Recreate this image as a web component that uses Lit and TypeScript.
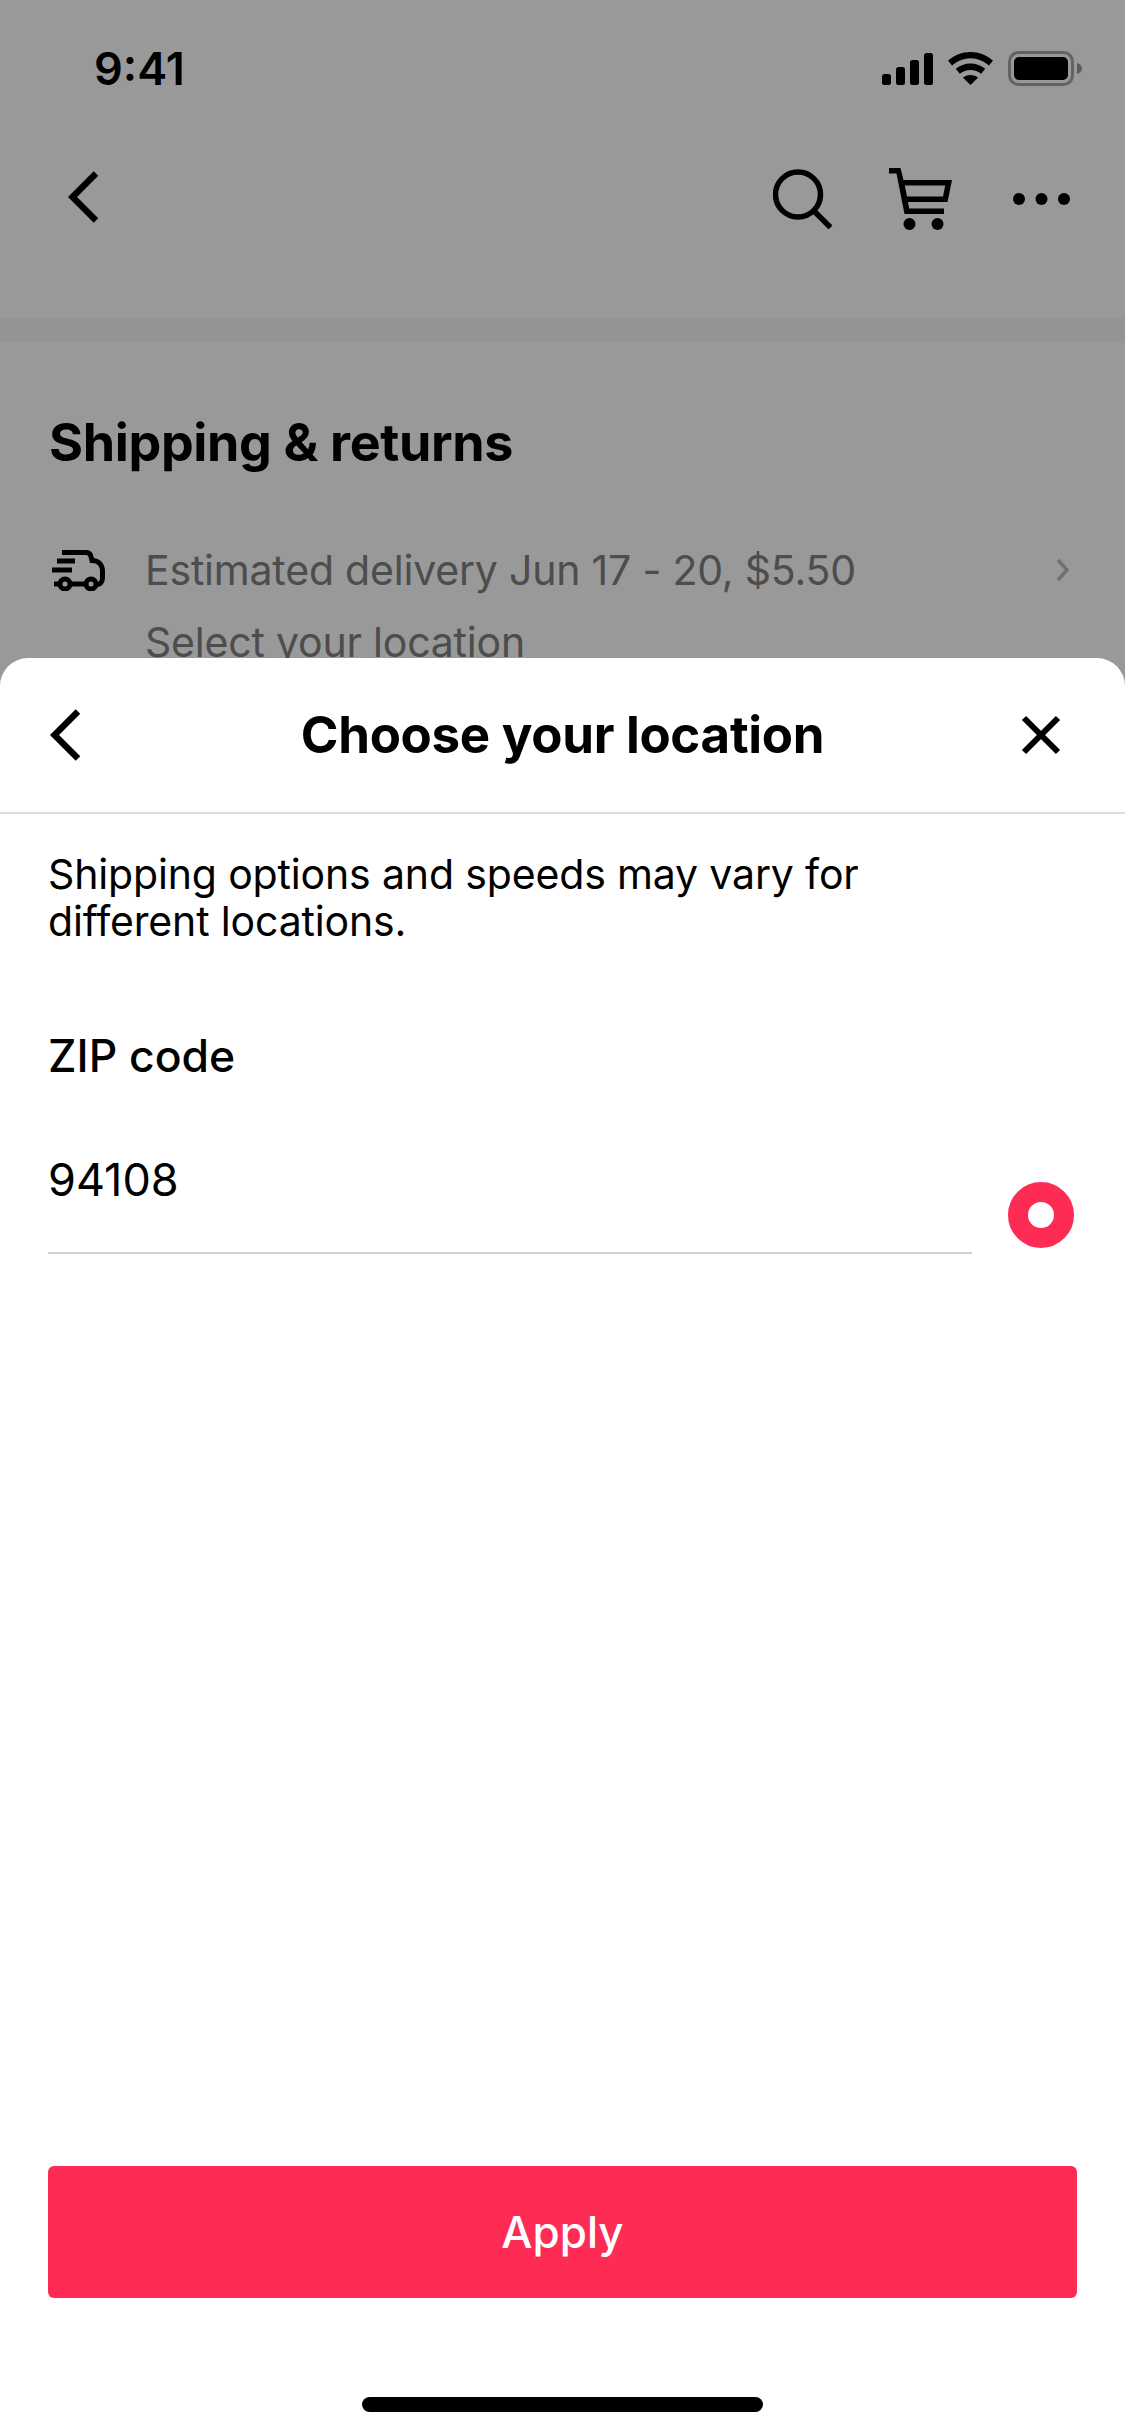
import { LitElement, html, css } from 'lit';
import { customElement } from 'lit/decorators.js';

const back = html`<svg class="back" viewBox="0 0 30 52"><path d="M28 2.500 4.500 26 28 49.500" fill="none" stroke="#000" stroke-width="6.500"/></svg>`;

@customElement('app-root')
export class AppRoot extends LitElement {
  static styles = css`
    :host {
      display: block;
      width: 1125px;
      height: 2436px;
      position: relative;
      overflow: hidden;
      background: #fff;
      color: #000;
      font-family: Inter, "Liberation Sans", sans-serif;
    }
    svg {
      display: block;
      flex: none;
    }
    .status {
      height: 133px;
      padding: 0 43px 0 94px;
      box-sizing: border-box;
      display: flex;
      align-items: center;
      justify-content: space-between;
    }
    .time {
      font-size: 45px;
      font-weight: 600;
      line-height: 32px;
      margin-top: 4px;
    }
    .status-icons {
      display: flex;
      align-items: center;
      gap: 15px;
      margin-top: 4px;
    }
    .nav {
      height: 185px;
      padding: 38px 55px 0 68px;
      box-sizing: border-box;
      display: flex;
      align-items: flex-start;
      justify-content: space-between;
    }
    .nav-actions {
      display: flex;
      align-items: center;
      margin-top: -3px;
    }
    .nav .back {
      width: 30px;
      height: 52px;
    }
    .search {
      margin-right: 55px;
    }
    .cart {
      margin-right: 61px;
    }
    .band {
      height: 24px;
      background: #f7f7f7;
    }
    .section {
      padding: 69px 55px 0 49px;
    }
    h2 {
      margin: 0;
      font-size: 52px;
      font-weight: 700;
      line-height: 64px;
      letter-spacing: -0.35px;
    }
    .row {
      display: flex;
      align-items: center;
      margin-top: 69px;
      color: #808080;
      font-size: 41px;
      letter-spacing: -0.2px;
      line-height: 52px;
    }
    .row .truck {
      margin: 0 40px 0 3px;
    }
    .row span {
      flex: 1;
    }
    .sub {
      margin: 20px 0 0 96px;
      color: #808080;
      font-size: 41px;
      letter-spacing: -0.2px;
      line-height: 52px;
    }
    .scrim {
      position: absolute;
      inset: 0;
      background: rgba(0, 0, 0, 0.4);
    }
    .sheet {
      position: absolute;
      left: 0;
      right: 0;
      top: 658px;
      bottom: 0;
      background: #fff;
      border-radius: 28px 28px 0 0;
      display: flex;
      flex-direction: column;
    }
    .sheet-head {
      height: 156px;
      box-sizing: border-box;
      border-bottom: 2px solid #dcdcdc;
      padding: 0 64px 0 50px;
      display: grid;
      grid-template-columns: 1fr auto 1fr;
      align-items: center;
    }
    .sheet-head .back {
      width: 30px;
      height: 52px;
    }
    .sheet-head .close {
      justify-self: end;
    }
    h1 {
      margin: 0 0 0 14px;
      font-size: 51px;
      font-weight: 700;
      line-height: 64px;
      letter-spacing: -0.3px;
    }
    .sheet-body {
      flex: 1;
      padding: 37px 48px 0;
      display: flex;
      flex-direction: column;
    }
    .desc {
      margin: 0;
      font-size: 41px;
      letter-spacing: -0.15px;
      line-height: 47px;
      width: 860px;
    }
    label {
      display: block;
      margin-top: 83px;
      font-size: 44.500px;
      font-weight: 500;
      line-height: 56px;
    }
    .field-row {
      display: flex;
      align-items: flex-end;
      gap: 36px;
      margin-top: 68px;
    }
    .field {
      width: 924px;
      height: 102px;
      box-sizing: border-box;
      border-bottom: 2px solid #d0d0d0;
      font-size: 45px;
      line-height: 56px;
    }
    .radio {
      width: 66px;
      height: 66px;
      box-sizing: border-box;
      border: 20px solid #fe2c55;
      border-radius: 50%;
      margin-bottom: 6px;
    }
    .spacer {
      flex: 1;
    }
    .apply {
      height: 132px;
      margin-bottom: 138px;
      border-radius: 6px;
      background: #fe2c55;
      color: #fff;
      font-size: 44px;
      font-weight: 500;
      display: flex;
      align-items: center;
      justify-content: center;
    }
    .home {
      position: absolute;
      left: 362px;
      bottom: 24px;
      width: 401px;
      height: 15px;
      border-radius: 8px;
      background: #000;
    }
  `;

  render() {
    return html`
      <div class="status">
        <div class="time">9:41</div>
        <div class="status-icons">
          <svg width="51" height="32" viewBox="0 0 51 32" fill="#000">
            <rect x="0" y="21" width="9" height="11" rx="2.5"/>
            <rect x="14" y="14" width="9" height="18" rx="2.5"/>
            <rect x="28" y="7" width="9" height="25" rx="2.5"/>
            <rect x="42" y="0" width="9" height="32" rx="2.5"/>
          </svg>
          <svg width="45" height="33" viewBox="0 0 45 33" fill="#000">
            <path d="M22.5 0C14 0 6.3 3.3 0 8.6l4 5C9.3 9.200 15.500 6.300 22.500 6.300S35.700 9.200 41 13.600l4-5C38.700 3.300 31 0 22.500 0Z"/>
            <path d="M22.500 11.500c-5.600 0-10.600 2-14.700 5.300l4 5c2.900-2.300 6.700-3.800 10.700-3.800s7.800 1.500 10.700 3.800l4-5c-4.100-3.300-9.100-5.300-14.700-5.300Z"/>
            <path d="M22.500 23c-2.900 0-5.500 1-7.500 2.700L22.500 33l7.500-7.300c-2-1.700-4.600-2.700-7.500-2.700Z"/>
          </svg>
          <svg width="74" height="35" viewBox="0 0 74 35">
            <rect x="1.500" y="1.500" width="63" height="32" rx="9" fill="none" stroke="#000" stroke-opacity=".35" stroke-width="3"/>
            <rect x="6" y="6" width="54" height="23" rx="5" fill="#000"/>
            <path d="M69 12c3 .6 5 3 5 5.500S72 22.400 69 23Z" fill="#000" fill-opacity=".4"/>
          </svg>
        </div>
      </div>

      <div class="nav">
        ${back}
        <div class="nav-actions">
          <svg class="search" width="60" height="60" viewBox="0 0 60 60" fill="none" stroke="#000" stroke-width="5.500">
            <circle cx="25" cy="25.500" r="22.500"/>
            <path d="M41 42l16.500 16.500"/>
          </svg>
          <svg class="cart" width="64" height="62" viewBox="0 0 64 62" fill="#000">
            <path d="M1 0h11.500l3 12H64l-4.500 22H20l1.200 6.500H56v5.500H16.500L8.500 5.500H1Zm15.800 17.500L19 28.500h36l2.200-11Z" fill-rule="evenodd"/>
            <circle cx="21.500" cy="56" r="6"/>
            <circle cx="49.500" cy="56" r="6"/>
          </svg>
          <svg width="57" height="12" viewBox="0 0 57 12" fill="#000">
            <circle cx="6" cy="6" r="6"/>
            <circle cx="28.500" cy="6" r="6"/>
            <circle cx="51" cy="6" r="6"/>
          </svg>
        </div>
      </div>
      <div class="band"></div>

      <div class="section">
        <h2>Shipping &amp; returns</h2>
        <div class="row">
          <svg class="truck" width="53" height="41" viewBox="0 0 53 41" fill="none" stroke="#000" stroke-width="5">
            <path d="M10 2.500H34c3 0 4.500 2 5 4l1 4c7 0 10.500 5 10.500 11v6c0 4-2 7-5.500 7h-1M2 34h6M19 34h14M5 11h18M0 20h20"/>
            <circle cx="13" cy="34" r="5"/>
            <circle cx="39" cy="34" r="5"/>
          </svg>
          <span>Estimated delivery Jun 17 - 20, $5.50</span>
          <svg width="14" height="24" viewBox="0 0 14 24" fill="none" stroke="#bbb" stroke-width="3.500">
            <path d="M2 2l9 10-9 10"/>
          </svg>
        </div>
        <div class="sub">Select your location</div>
      </div>

      <div class="scrim"></div>

      <div class="sheet">
        <div class="sheet-head">
          ${back}
          <h1>Choose your location</h1>
          <svg class="close" width="40" height="40" viewBox="0 0 40 40" fill="none" stroke="#000" stroke-width="6">
            <path d="M3 3l34 34M37 3 3 37"/>
          </svg>
        </div>
        <div class="sheet-body">
          <p class="desc">Shipping options and speeds may vary for different locations.</p>
          <label>ZIP code</label>
          <div class="field-row">
            <div class="field">94108</div>
            <div class="radio"></div>
          </div>
          <div class="spacer"></div>
          <div class="apply">Apply</div>
        </div>
      </div>
      <div class="home"></div>
    `;
  }
}
